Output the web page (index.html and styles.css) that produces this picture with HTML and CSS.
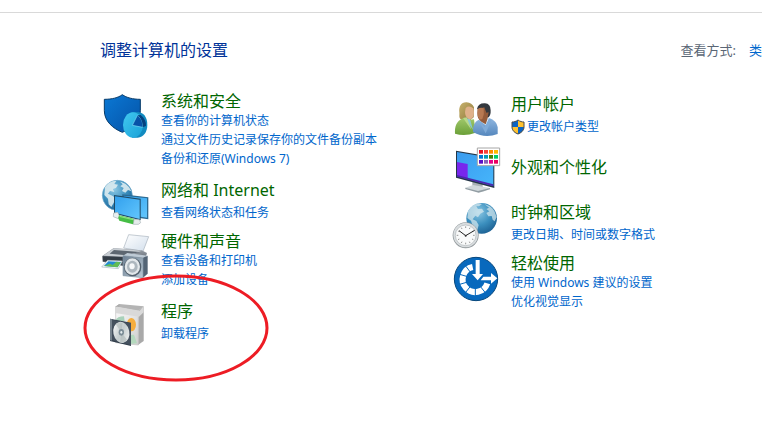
FILE: index.html
```html
<!DOCTYPE html>
<html lang="zh-CN">
<head>
    <meta charset="UTF-8">
    <meta name="viewport" content="width=device-width, initial-scale=1.0">
    <title>控制面板</title>
    <link rel="stylesheet" href="styles.css">
</head>
<body>
    <div class="toolbar-edge"></div>

    <header class="page-header">
        <h1>调整计算机的设置</h1>
        <div class="view-by">
            <span>查看方式:</span>
            <a href="#">类</a>
        </div>
    </header>

    <main class="categories">
        <div class="column">
            <section class="item spaced">
                <!-- 盾牌 -->
                <svg class="icon" viewBox="12 15 144 144" aria-hidden="true">
                    <defs>
                        <linearGradient id="shield" x1="0" y1="0" x2="1" y2="1">
                            <stop offset="0" stop-color="#0a78d4"/>
                            <stop offset="1" stop-color="#0552a6"/>
                        </linearGradient>
                        <linearGradient id="pie" x1="0" y1="0" x2="1" y2="1">
                            <stop offset="0" stop-color="#42c8f0"/>
                            <stop offset="1" stop-color="#18a2d8"/>
                        </linearGradient>
                    </defs>
                    <path d="M79 26C67 35 48 40 25 40V74C25 105 50 127 79 139C107 127 133 105 133 74V40C111 40 91 35 79 26Z" fill="url(#shield)" stroke="#073a68" stroke-width="3"/>
                    <path d="M106 79L123 78C143 78 154 94 154 116C154 138 143 153 125 155L108 155Z" fill="#128bc0"/>
                    <ellipse cx="111" cy="117" rx="30" ry="38" fill="url(#pie)"/>
                    <path d="M109 118L124 88C137 96 141 108 140 124Z" fill="#0753a8" stroke="#7be0f8" stroke-width="2"/>
                    <path d="M124 88L134 87C146 96 151 108 150 120L140 124C140 108 136 96 124 88Z" fill="#06417f"/>
                </svg>
                <div class="text">
                    <h2><a href="#">系统和安全</a></h2>
                    <ul>
                        <li><a href="#">查看你的计算机状态</a></li>
                        <li><a href="#">通过文件历史记录保存你的文件备份副本</a></li>
                        <li><a href="#">备份和还原(Windows 7)</a></li>
                    </ul>
                </div>
            </section>

            <section class="item single">
                <!-- 地球和两台显示器 -->
                <svg class="icon" viewBox="12 24 144 144" aria-hidden="true">
                    <defs>
                        <radialGradient id="globe" cx="0.4" cy="0.3" r="0.75">
                            <stop offset="0" stop-color="#8cc8e4"/>
                            <stop offset="0.55" stop-color="#3b8fbe"/>
                            <stop offset="1" stop-color="#1c5f91"/>
                        </radialGradient>
                        <linearGradient id="screen" x1="0" y1="0" x2="1" y2="1">
                            <stop offset="0" stop-color="#32a0ee"/>
                            <stop offset="1" stop-color="#62c6fc"/>
                        </linearGradient>
                    </defs>
                    <circle cx="64" cy="70" r="45" fill="url(#globe)" stroke="#6faacb" stroke-width="2"/>
                    <path d="M27 46C36 31 50 26 61 27L55 36L66 38L60 48L51 51L55 60L42 57L36 65L49 71L60 79L54 91L46 105L38 97L36 80L25 69Z" fill="#dcebf0" opacity="0.9"/>
                    <path d="M72 29C88 32 100 42 106 58L96 54L88 62L78 57L83 48L73 43L80 37Z" fill="#dcebf0" opacity="0.9"/>
                    <path d="M79 67L157 76V142L135 139L79 120Z" fill="#2c6a92"/>
                    <path d="M83 71L153 79V137L83 126Z" fill="url(#screen)"/>
                    <path d="M54 69L134 80V145L54 125Z" fill="#1f4b66"/>
                    <path d="M57 73L131 83V141L57 122Z" fill="url(#screen)"/>
                    <path d="M53 123L65 121L71 133L67 140L52 134Z" fill="#e8eff0" stroke="#a4b1b4" stroke-width="2"/>
                    <path d="M69 130L112 140Q118 147 111 157L70 146Q64 138 69 130Z" fill="#46bd45"/>
                    <path d="M71 133L112 143" stroke="#88e27b" stroke-width="4" fill="none"/>
                    <path d="M114 142L130 143L134 152L127 157L112 157Z" fill="#e6ecec" stroke="#a4b1b4" stroke-width="2"/>
                </svg>
                <div class="text">
                    <h2><a href="#">网络和 Internet</a></h2>
                    <ul>
                        <li><a href="#">查看网络状态和任务</a></li>
                    </ul>
                </div>
            </section>

            <section class="item spaced">
                <!-- 打印机和音箱 -->
                <svg class="icon" viewBox="12 9 144 144" aria-hidden="true">
                    <defs>
                        <linearGradient id="paper" x1="0" y1="0" x2="1" y2="1">
                            <stop offset="0" stop-color="#ffffff"/>
                            <stop offset="1" stop-color="#d3dfec"/>
                        </linearGradient>
                        <linearGradient id="printer" x1="0" y1="0" x2="0" y2="1">
                            <stop offset="0" stop-color="#a2a8b0"/>
                            <stop offset="1" stop-color="#3e464f"/>
                        </linearGradient>
                        <linearGradient id="speaker" x1="0" y1="0" x2="1" y2="1">
                            <stop offset="0" stop-color="#6a7d90"/>
                            <stop offset="1" stop-color="#bac9d5"/>
                        </linearGradient>
                    </defs>
                    <path d="M83 60L98 20L158 26L141 70Z" fill="url(#paper)" stroke="#a7b2bd" stroke-width="2"/>
                    <path d="M19 84L53 60L137 67L153 75L145 102L79 113L20 101Z" fill="url(#printer)"/>
                    <path d="M21 83L54 61L137 68L91 86Z" fill="#c9ced3"/>
                    <path d="M54 66L132 72L91 82L41 77Z" fill="#5d6670"/>
                    <path d="M20 85L90 88V104L21 99Z" fill="#343d46"/>
                    <path d="M35 97L79 99L67 122L17 117Z" fill="#f6fafc" stroke="#aab7c0" stroke-width="2"/>
                    <path d="M37 100L75 102L65 118L24 114Z" fill="#238bd3"/>
                    <path d="M24 114L42 107L50 111L61 101L74 103L65 118Z" fill="#62bb55"/>
                    <path d="M81 83L94 75L155 83L141 90Z" fill="#becad5"/>
                    <path d="M141 90L155 83V137L141 149Z" fill="#536475"/>
                    <path d="M81 83L141 90V149L81 143Z" fill="url(#speaker)" stroke="#8798a6" stroke-width="2"/>
                    <ellipse cx="110" cy="117" rx="26" ry="28" fill="#53616d"/>
                    <ellipse cx="109" cy="116" rx="23" ry="25" fill="#e2e7ea"/>
                    <ellipse cx="109" cy="116" rx="16" ry="18" fill="#adb7be"/>
                    <ellipse cx="108" cy="115" rx="8" ry="9" fill="#f6f8f9"/>
                </svg>
                <div class="text">
                    <h2><a href="#">硬件和声音</a></h2>
                    <ul>
                        <li><a href="#">查看设备和打印机</a></li>
                        <li><a href="#">添加设备</a></li>
                    </ul>
                </div>
            </section>

            <section class="item single">
                <!-- 软件包装盒和光盘 -->
                <svg class="icon" viewBox="60 93 144 144" aria-hidden="true">
                    <defs>
                        <linearGradient id="box" x1="0" y1="0" x2="1" y2="1">
                            <stop offset="0" stop-color="#fafafa"/>
                            <stop offset="1" stop-color="#cfcfcf"/>
                        </linearGradient>
                        <linearGradient id="disc" x1="0" y1="0" x2="1" y2="1">
                            <stop offset="0" stop-color="#ffffff"/>
                            <stop offset="0.5" stop-color="#c5cdce"/>
                            <stop offset="1" stop-color="#f5f7f7"/>
                        </linearGradient>
                    </defs>
                    <path d="M106 110L118 102L191 109L175 123Z" fill="#b4b4b4"/>
                    <path d="M175 123L191 109V213L174 225Z" fill="#a9a9a9"/>
                    <path d="M107 114L175 125V225L107 218Z" fill="url(#box)" stroke="#c2c2c2" stroke-width="2"/>
                    <path d="M105 111L118 102V119L105 130Z" fill="#ababab"/>
                    <path d="M105 111L112 110L179 122L191 109V127L177 140L105 129Z" fill="#d9d9d9"/>
                    <path d="M105 152Q112 139 132 139L134 154Z" fill="#a9d1ba"/>
                    <ellipse cx="154" cy="164" rx="14" ry="20" fill="#f5ad3d"/>
                    <path d="M150 195L162 194L171 220L152 222Z" fill="#b4d9bd"/>
                    <path d="M90 146L153 158V228L90 213Z" fill="#303d4b"/>
                    <path d="M96 149L153 160V226L96 211Z" fill="#44505d"/>
                    <path d="M90 146L96 148V212L90 211Z" fill="#77838d"/>
                    <ellipse cx="124" cy="187" rx="24" ry="32" transform="rotate(-12 124 187)" fill="url(#disc)"/>
                    <path d="M124 187L107 163Q116 154 128 158ZM124 187L141 209Q132 221 120 217Z" fill="#a7b3b3" opacity="0.55"/>
                    <ellipse cx="124" cy="187" rx="8" ry="10" fill="#7b8c96"/>
                    <ellipse cx="124" cy="187" rx="3" ry="4" fill="#e6eef0"/>
                </svg>
                <div class="text">
                    <h2><a href="#">程序</a></h2>
                    <ul>
                        <li><a href="#">卸载程序</a></li>
                    </ul>
                </div>
                <!-- 红圈标注 -->
                <svg class="mark" viewBox="0 0 186 108" aria-hidden="true">
                    <ellipse cx="93" cy="54" rx="91" ry="52" fill="none" stroke="#ed1c24" stroke-width="3"/>
                </svg>
            </section>
        </div>

        <div class="column column-right">
            <section class="item single">
                <!-- 两个用户 -->
                <svg class="icon" viewBox="15 12 144 144" aria-hidden="true">
                    <defs>
                        <linearGradient id="green" x1="0" y1="0" x2="0" y2="1">
                            <stop offset="0" stop-color="#a0c86b"/>
                            <stop offset="1" stop-color="#6a9f37"/>
                        </linearGradient>
                        <linearGradient id="blue" x1="0" y1="0" x2="0" y2="1">
                            <stop offset="0" stop-color="#91b8e1"/>
                            <stop offset="1" stop-color="#5587bd"/>
                        </linearGradient>
                        <linearGradient id="hair" x1="0" y1="0" x2="1" y2="1">
                            <stop offset="0" stop-color="#c8b26d"/>
                            <stop offset="1" stop-color="#8c7739"/>
                        </linearGradient>
                    </defs>
                    <path d="M65 37C48 36 41 51 43 67C44 77 41 82 47 88L73 92L86 82L87 52Q81 38 65 37Z" fill="url(#hair)"/>
                    <path d="M30 131C29 110 34 93 54 85L74 89L87 88L92 128Q59 141 30 131Z" fill="url(#green)"/>
                    <path d="M57 83L75 87L84 119Z" fill="#8ac7d0"/>
                    <path d="M62 54Q72 45 85 55Q89 71 84 81Q79 91 70 86Q60 80 60 66Z" fill="#dfb18a"/>
                    <path d="M54 84L65 82L79 119Z" fill="#b7d989"/>
                    <path d="M84 126C83 108 89 94 102 89L133 84Q154 92 158 111L158 132Q119 146 84 126Z" fill="url(#blue)"/>
                    <path d="M101 89L132 84L124 107Z" fill="#d8e8f4"/>
                    <path d="M96 57Q99 39 120 40Q137 41 137 61Q138 78 128 84L115 59Z" fill="#34383e"/>
                    <path d="M98 57L118 52L124 68L131 67L127 88L122 103Q109 97 104 91Q94 82 98 57Z" fill="#945b3a"/>
                    <path d="M98 57Q107 50 116 55Q119 71 112 87Q104 92 99 79Z" fill="#b77952"/>
                    <path d="M100 90L119 111L132 87L140 90L122 130Z" fill="#80abd7"/>
                </svg>
                <div class="text">
                    <h2><a href="#">用户帐户</a></h2>
                    <ul>
                        <li>
                            <a href="#" class="with-shield">
                                <svg class="uac" viewBox="0 0 28 32" aria-hidden="true">
                                    <path d="M14 2C10 5 6 6 2 6V16C2 23 8 28 14 30Z" fill="#0a63c4"/>
                                    <path d="M14 2C18 5 22 6 26 6V16C26 23 20 28 14 30Z" fill="#ffc12e"/>
                                    <path d="M2 16H14V30C8 28 2 23 2 16Z" fill="#ffc12e"/>
                                    <path d="M14 16H26C26 23 20 28 14 30Z" fill="#0a63c4"/>
                                    <path d="M14 2C10 5 6 6 2 6V16C2 23 8 28 14 30C20 28 26 23 26 16V6C22 6 18 5 14 2Z" fill="none" stroke="#4b4b4b" stroke-width="2"/>
                                </svg>
                                更改帐户类型
                            </a>
                        </li>
                    </ul>
                </div>
            </section>

            <section class="item title-only spaced">
                <!-- 显示器和调色板 -->
                <svg class="icon" viewBox="15 9 144 144" aria-hidden="true">
                    <defs>
                        <linearGradient id="desktop" x1="0" y1="0" x2="1" y2="1">
                            <stop offset="0" stop-color="#3a9bee"/>
                            <stop offset="1" stop-color="#46b6fb"/>
                        </linearGradient>
                    </defs>
                    <path d="M82 119L113 125V138L82 134Z" fill="#a9b1b5"/>
                    <path d="M61 137L84 129L135 138L118 148L99 151Z" fill="#d1d8db"/>
                    <path d="M61 137L99 147L135 138V142L101 152L61 141Z" fill="#929da3"/>
                    <path d="M33 26L148 46V138L33 107Z" fill="#243647"/>
                    <path d="M36 30L145 49V132L36 103Z" fill="url(#desktop)"/>
                    <path d="M36 60L68 66V111L36 103Z" fill="#7827ed"/>
                    <path d="M36 99L145 127V133L36 104Z" fill="#4b27ad"/>
                    <path d="M97 18H164V71H97Z" fill="#fff" stroke="#a6a6a6" stroke-width="3"/>
                    <path d="M102 24h12v11h-12z" fill="#e81123"/>
                    <path d="M117 24h12v11h-12z" fill="#f7433a"/>
                    <path d="M132 24h12v11h-12z" fill="#ff8c00"/>
                    <path d="M147 24h12v11h-12z" fill="#ffb900"/>
                    <path d="M102 39h12v11h-12z" fill="#0078d7"/>
                    <path d="M117 39h12v11h-12z" fill="#0099bc"/>
                    <path d="M132 39h12v11h-12z" fill="#498205"/>
                    <path d="M147 39h12v11h-12z" fill="#00cc6a"/>
                    <path d="M102 54h12v11h-12z" fill="#5a0fc8"/>
                    <path d="M117 54h12v11h-12z" fill="#8764b8"/>
                    <path d="M132 54h12v11h-12z" fill="#e3008c"/>
                    <path d="M147 54h12v11h-12z" fill="#ea005e"/>
                </svg>
                <div class="text">
                    <h2><a href="#">外观和个性化</a></h2>
                </div>
            </section>

            <section class="item single">
                <!-- 地球和时钟 -->
                <svg class="icon" viewBox="15 21 144 144" aria-hidden="true">
                    <circle cx="110" cy="70" r="46" fill="url(#globe)"/>
                    <path d="M69 49Q80 29 100 25L111 27L102 34L94 34L99 42L111 41L117 50L106 56L99 67L91 62L83 73L94 78L101 90L97 105L84 96L78 77L67 69Z" fill="#dcebf0" opacity="0.7"/>
                    <path d="M119 28Q138 32 148 48L155 66L149 79L143 74L140 63L130 64L124 54L133 49L124 42L132 38Z" fill="#dcebf0" opacity="0.7"/>
                    <circle cx="62" cy="121" r="39" fill="#8f9699"/>
                    <circle cx="62" cy="120" r="37" fill="#d9dddf"/>
                    <circle cx="62" cy="121" r="31" fill="#f9fafa" stroke="#b1b7ba" stroke-width="2"/>
                    <path d="M62 94V99M62 143V148M35 121H40M84 121H89M49 98L51 102M75 98L73 102M39 108L43 110M85 108L81 110M39 134L43 132M85 134L81 132M49 144L51 140M75 144L73 140" stroke="#666" stroke-width="2"/>
                    <path d="M62 122L42 107M62 122L89 106" fill="none" stroke="#232323" stroke-width="3"/>
                    <circle cx="62" cy="122" r="3" fill="#333"/>
                </svg>
                <div class="text">
                    <h2><a href="#">时钟和区域</a></h2>
                    <ul>
                        <li><a href="#">更改日期、时间或数字格式</a></li>
                    </ul>
                </div>
            </section>

            <section class="item">
                <!-- 轻松使用 -->
                <svg class="icon" viewBox="15 12 144 144" aria-hidden="true">
                    <circle cx="93" cy="90" r="65" fill="#0869bd" stroke="#07477c" stroke-width="3"/>
                    <path d="M83 54A38 38 0 1 0 127 103" fill="none" stroke="#fff" stroke-width="18"/>
                    <path d="M63 52L77 71M44 76L68 83M44 106L68 99M62 130L77 111M91 141V117M120 130L105 111" stroke="#0869bd" stroke-width="3"/>
                    <path d="M92 33H104V75H114L98 94L81 75H92Z" fill="#fff"/>
                    <path d="M107 94L115 83H138V72L157 88L138 104V94Z" fill="#fff"/>
                </svg>
                <div class="text">
                    <h2><a href="#">轻松使用</a></h2>
                    <ul>
                        <li><a href="#">使用 Windows 建议的设置</a></li>
                        <li><a href="#">优化视觉显示</a></li>
                    </ul>
                </div>
            </section>
        </div>
    </main>
</body>
</html>
```

FILE: styles.css
```css
body {
    margin: 0;
    background-color: #fff;
    font-family: "Noto Sans", "Noto Sans CJK SC", sans-serif;
    font-size: 12px;
    overflow-x: hidden;
}
a {
    color: #0066cc;
    text-decoration: none;
}
a:hover {
    text-decoration: underline;
}
h1, h2, ul {
    margin: 0;
    padding: 0;
    font-weight: normal;
    list-style: none;
}
.toolbar-edge {
    height: 12px;
    border-bottom: 1px solid #d9d9d9;
}

.page-header {
    display: flex;
    justify-content: space-between;
    align-items: center;
    padding: 27px 0 0 100px;
    white-space: nowrap;
}
h1 {
    color: #003399;
    font-size: 16px;
    line-height: 20px;
}
.view-by {
    display: flex;
    gap: 13px;
    color: #5a6675;
    font-size: 13px;
    line-height: 20px;
}

.categories {
    display: grid;
    grid-template-columns: 350px 1fr;
    padding: 31px 0 40px 100px;
    white-space: nowrap;
}
.column-right {
    padding-top: 3px;
}

.item {
    display: flex;
    position: relative;
    gap: 13px;
    margin-bottom: 3px;
}
.item.spaced {
    margin-bottom: 12px;
}
.column-right .spaced {
    margin-bottom: 9px;
}
.title-only {
    align-items: center;
}
.title-only .text {
    padding-bottom: 4px;
}
.icon {
    flex: none;
    width: 48px;
    height: 48px;
    overflow: visible;
}
h2 {
    font-size: 16px;
    line-height: 20px;
}
h2 a {
    color: #006600;
}
li {
    line-height: 19px;
}
/* 只有一个链接时，标题下多留一点空 */
.single ul {
    margin-top: 3px;
}

.with-shield {
    display: flex;
    align-items: center;
    gap: 2px;
}
.uac {
    width: 14px;
    height: 16px;
}

/* 红圈盖在文字上面 */
.mark {
    position: absolute;
    top: -27px;
    left: -17px;
    width: 186px;
    height: 108px;
    pointer-events: none;
}
```
